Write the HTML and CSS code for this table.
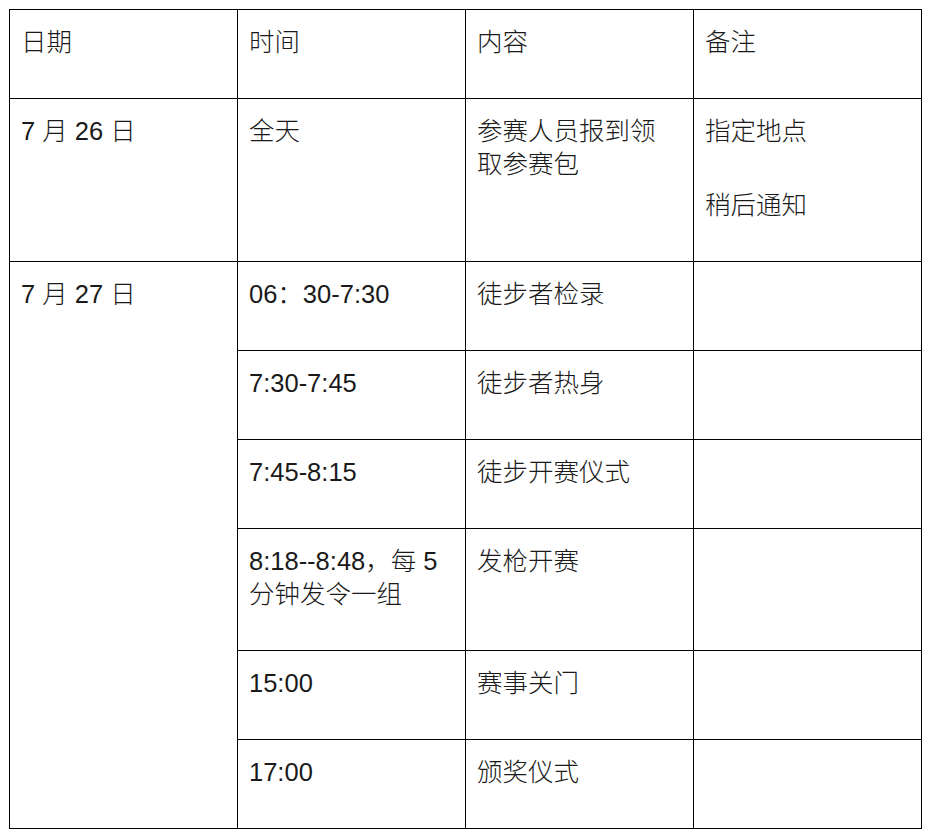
FILE: index.html
```html
<!DOCTYPE html>
<html lang="zh">
<head>
<meta charset="utf-8">
<title>赛程安排</title>
<link rel="stylesheet" href="styles.css">
</head>
<body>
<table class="schedule">
  <colgroup>
    <col class="c1"><col class="c2"><col class="c3"><col class="c4">
  </colgroup>
  <tbody>
    <tr>
      <td>日期</td>
      <td>时间</td>
      <td>内容</td>
      <td>备注</td>
    </tr>
    <tr>
      <td>7 月 26 日</td>
      <td>全天</td>
      <td>参赛人员报到领取参赛包</td>
      <td><p>指定地点</p><p class="next">稍后通知</p></td>
    </tr>
    <tr>
      <td rowspan="6">7 月 27 日</td>
      <td>06：30-7:30</td>
      <td>徒步者检录</td>
      <td></td>
    </tr>
    <tr>
      <td>7:30-7:45</td>
      <td>徒步者热身</td>
      <td></td>
    </tr>
    <tr>
      <td>7:45-8:15</td>
      <td>徒步开赛仪式</td>
      <td></td>
    </tr>
    <tr>
      <td>8:18--8:48，每 5 分钟发令一组</td>
      <td>发枪开赛</td>
      <td></td>
    </tr>
    <tr>
      <td>15:00</td>
      <td>赛事关门</td>
      <td></td>
    </tr>
    <tr>
      <td>17:00</td>
      <td>颁奖仪式</td>
      <td></td>
    </tr>
  </tbody>
</table>
</body>
</html>
```

FILE: styles.css
```css
html, body {
  margin: 0;
  padding: 0;
  background: #ffffff;
}
body {
  padding: 9px 0 0 9px;
  font-family: "Liberation Sans", "Noto Sans CJK SC", sans-serif;
  font-size: 25.5px;
  font-weight: 300;
  line-height: 33px;
  color: #1a1a1a;
}
.schedule {
  border-collapse: collapse;
  table-layout: fixed;
  width: 913px;
}
.c1 { width: 228px; }
.c2 { width: 228px; }
.c3 { width: 228px; }
.c4 { width: 228px; }
.schedule td {
  border: 1.4px solid #000;
  vertical-align: top;
  padding: 16px 16px 39px 11px;
  word-break: normal;
}
.schedule p {
  margin: 0;
}
.schedule p.next {
  margin-top: 41px;
}
```
